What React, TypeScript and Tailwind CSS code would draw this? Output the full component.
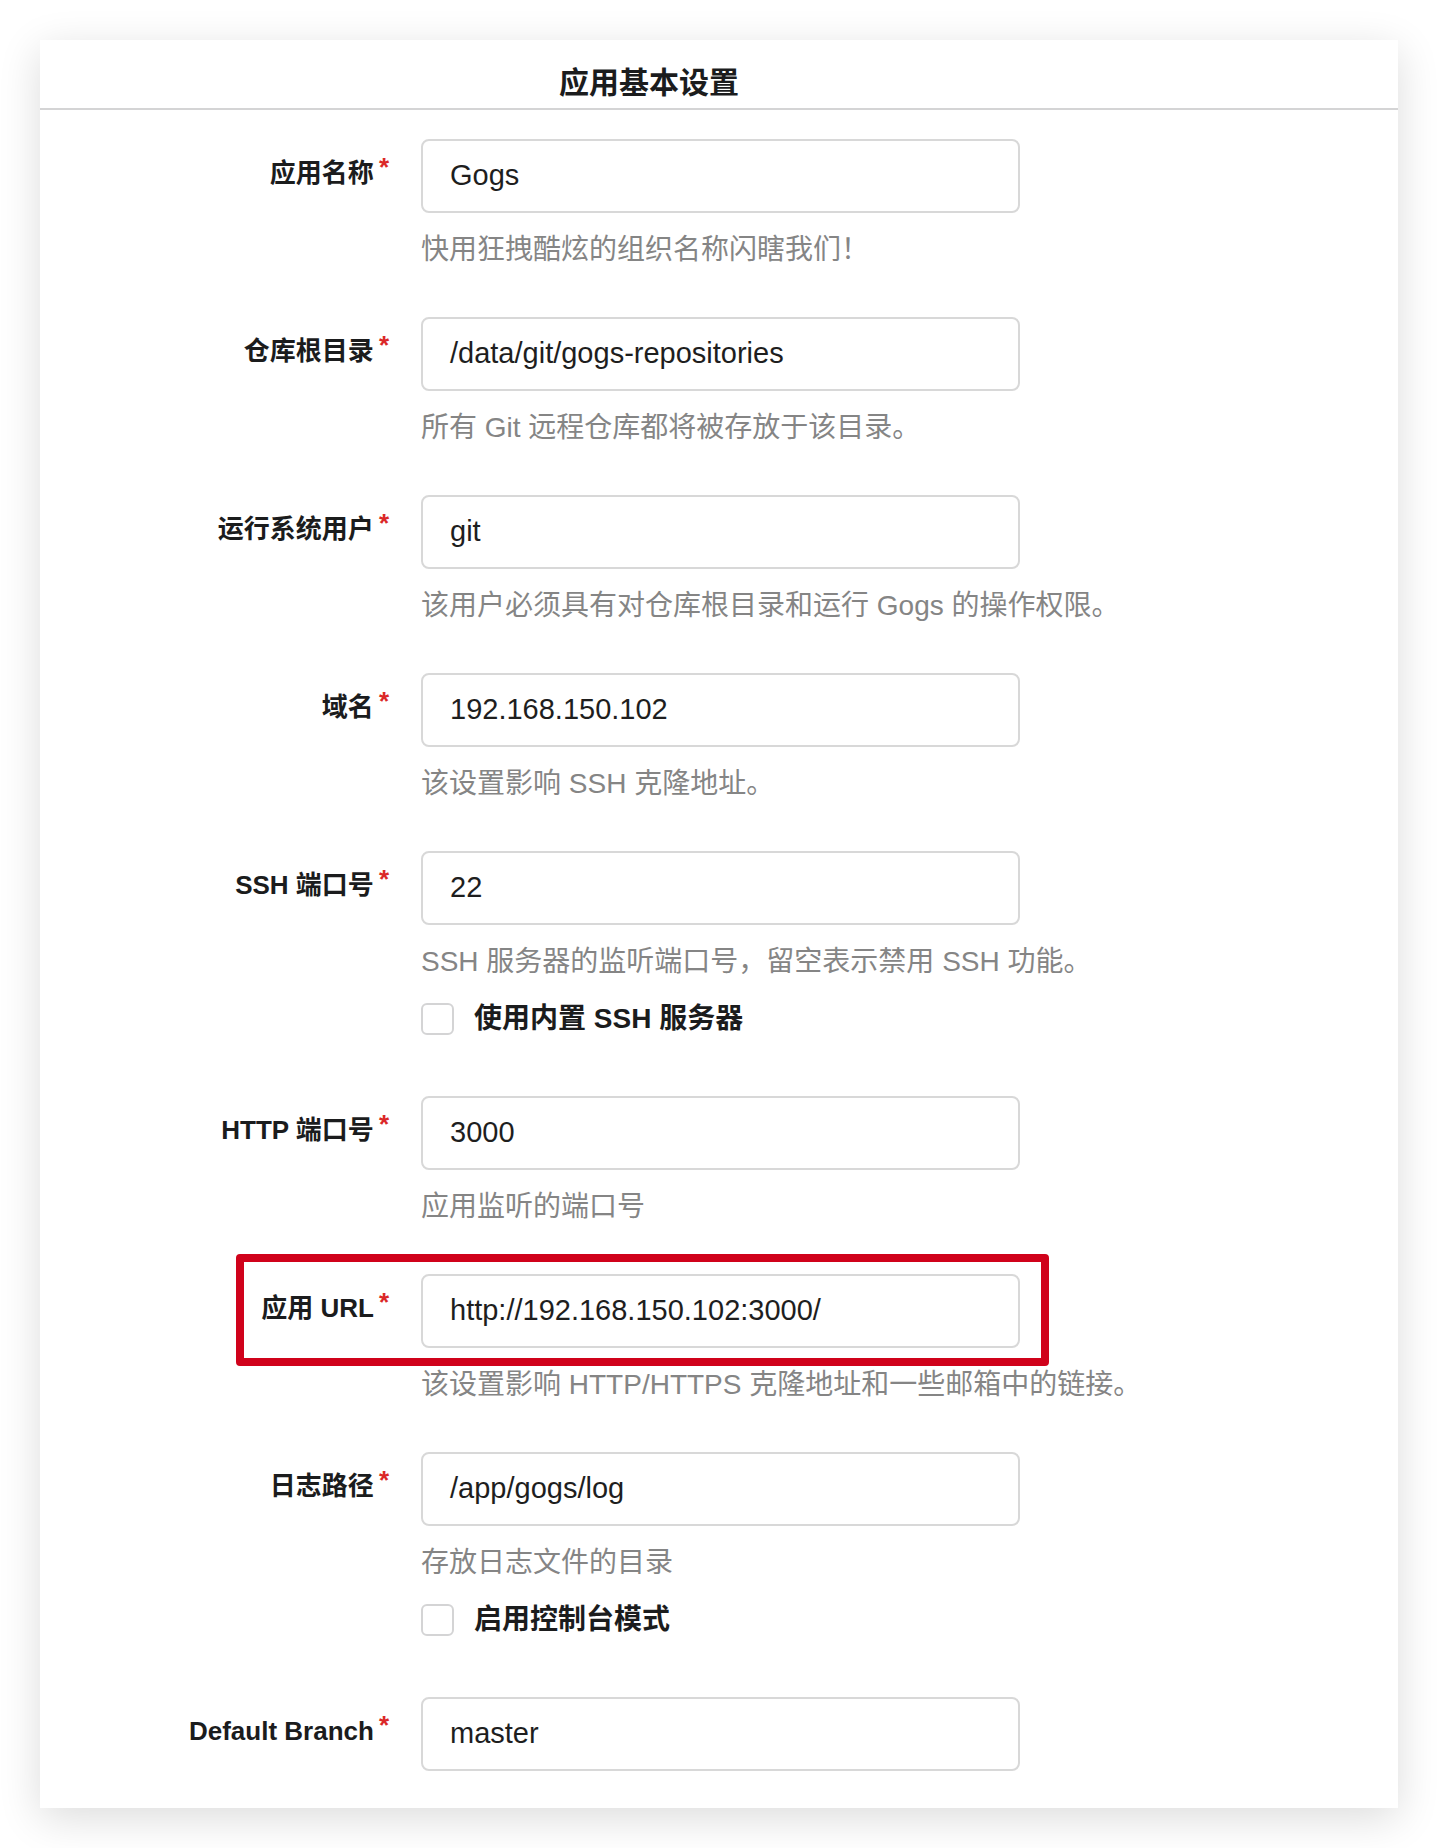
import React from "react";

type Row = {
  label: string;
  value: string;
  help?: string;
  checkbox?: string;
  highlight?: boolean;
};

const rows: Row[] = [
  { label: "应用名称", value: "Gogs", help: "快用狂拽酷炫的组织名称闪瞎我们！" },
  { label: "仓库根目录", value: "/data/git/gogs-repositories", help: "所有 Git 远程仓库都将被存放于该目录。" },
  { label: "运行系统用户", value: "git", help: "该用户必须具有对仓库根目录和运行 Gogs 的操作权限。" },
  { label: "域名", value: "192.168.150.102", help: "该设置影响 SSH 克隆地址。" },
  { label: "SSH 端口号", value: "22", help: "SSH 服务器的监听端口号，留空表示禁用 SSH 功能。", checkbox: "使用内置 SSH 服务器" },
  { label: "HTTP 端口号", value: "3000", help: "应用监听的端口号" },
  { label: "应用 URL", value: "http://192.168.150.102:3000/", help: "该设置影响 HTTP/HTTPS 克隆地址和一些邮箱中的链接。", highlight: true },
  { label: "日志路径", value: "/app/gogs/log", help: "存放日志文件的目录", checkbox: "启用控制台模式" },
  { label: "Default Branch", value: "master" },
];

function FieldRow({ row, last }: { row: Row; last: boolean }) {
  const bottom = last ? "" : row.checkbox ? "mb-[61px]" : "mb-[47px]";
  return (
    <div className={`relative flex ${bottom}`}>
      {row.highlight && (
        <div className="pointer-events-none absolute left-[196px] top-[-20px] h-[112px] w-[813px] rounded-[4px] border-[8px] border-[#d0021b]" />
      )}
      <div className="flex h-[74px] w-[349px] shrink-0 items-center justify-end pb-[6px]">
        <span className="text-[26px] font-bold leading-[34px] text-[#1b1c1d]">{row.label}</span>
        <span className="relative -top-[6px] ml-[5px] text-[26px] font-bold leading-[34px] text-[#db2828]">*</span>
      </div>
      <div className="ml-[32px] w-[599px]">
        <div className="flex h-[74px] items-center rounded-[8px] border-2 border-[#d8d8d8] bg-white pl-[27px] text-[29px] text-[#1e1e1e]">
          {row.value}
        </div>
        {row.help && (
          <div className="mt-[17px] whitespace-nowrap text-[28px] leading-[40px] text-[#858585]">{row.help}</div>
        )}
        {row.checkbox && (
          <div className="mt-[21px] flex h-[32px] items-center">
            <div className="h-[32px] w-[33px] rounded-[6px] border-2 border-[#d4d4d5] bg-white" />
            <span className="ml-[20px] text-[28px] font-bold leading-[32px] text-[#1b1c1d]">{row.checkbox}</span>
          </div>
        )}
      </div>
    </div>
  );
}

export default function App() {
  return (
    <div className="min-h-[1848px] w-[1438px] bg-white px-[40px] pt-[40px] font-['Liberation_Sans','Noto_Sans_CJK_SC',sans-serif]">
      <div className="w-[1358px] bg-white pb-[37px] shadow-[0_10px_40px_rgba(0,0,0,0.14)]">
        <div className="flex h-[70px] items-center border-b-2 border-[#d4d4d5] pl-[519px] pt-[17px]">
          <h3 className="text-[30px] font-bold leading-[40px] text-[#1b1c1d]">应用基本设置</h3>
        </div>
        <div className="pt-[29px]">
          {rows.map((r, i) => (
            <FieldRow key={r.label} row={r} last={i === rows.length - 1} />
          ))}
        </div>
      </div>
    </div>
  );
}
